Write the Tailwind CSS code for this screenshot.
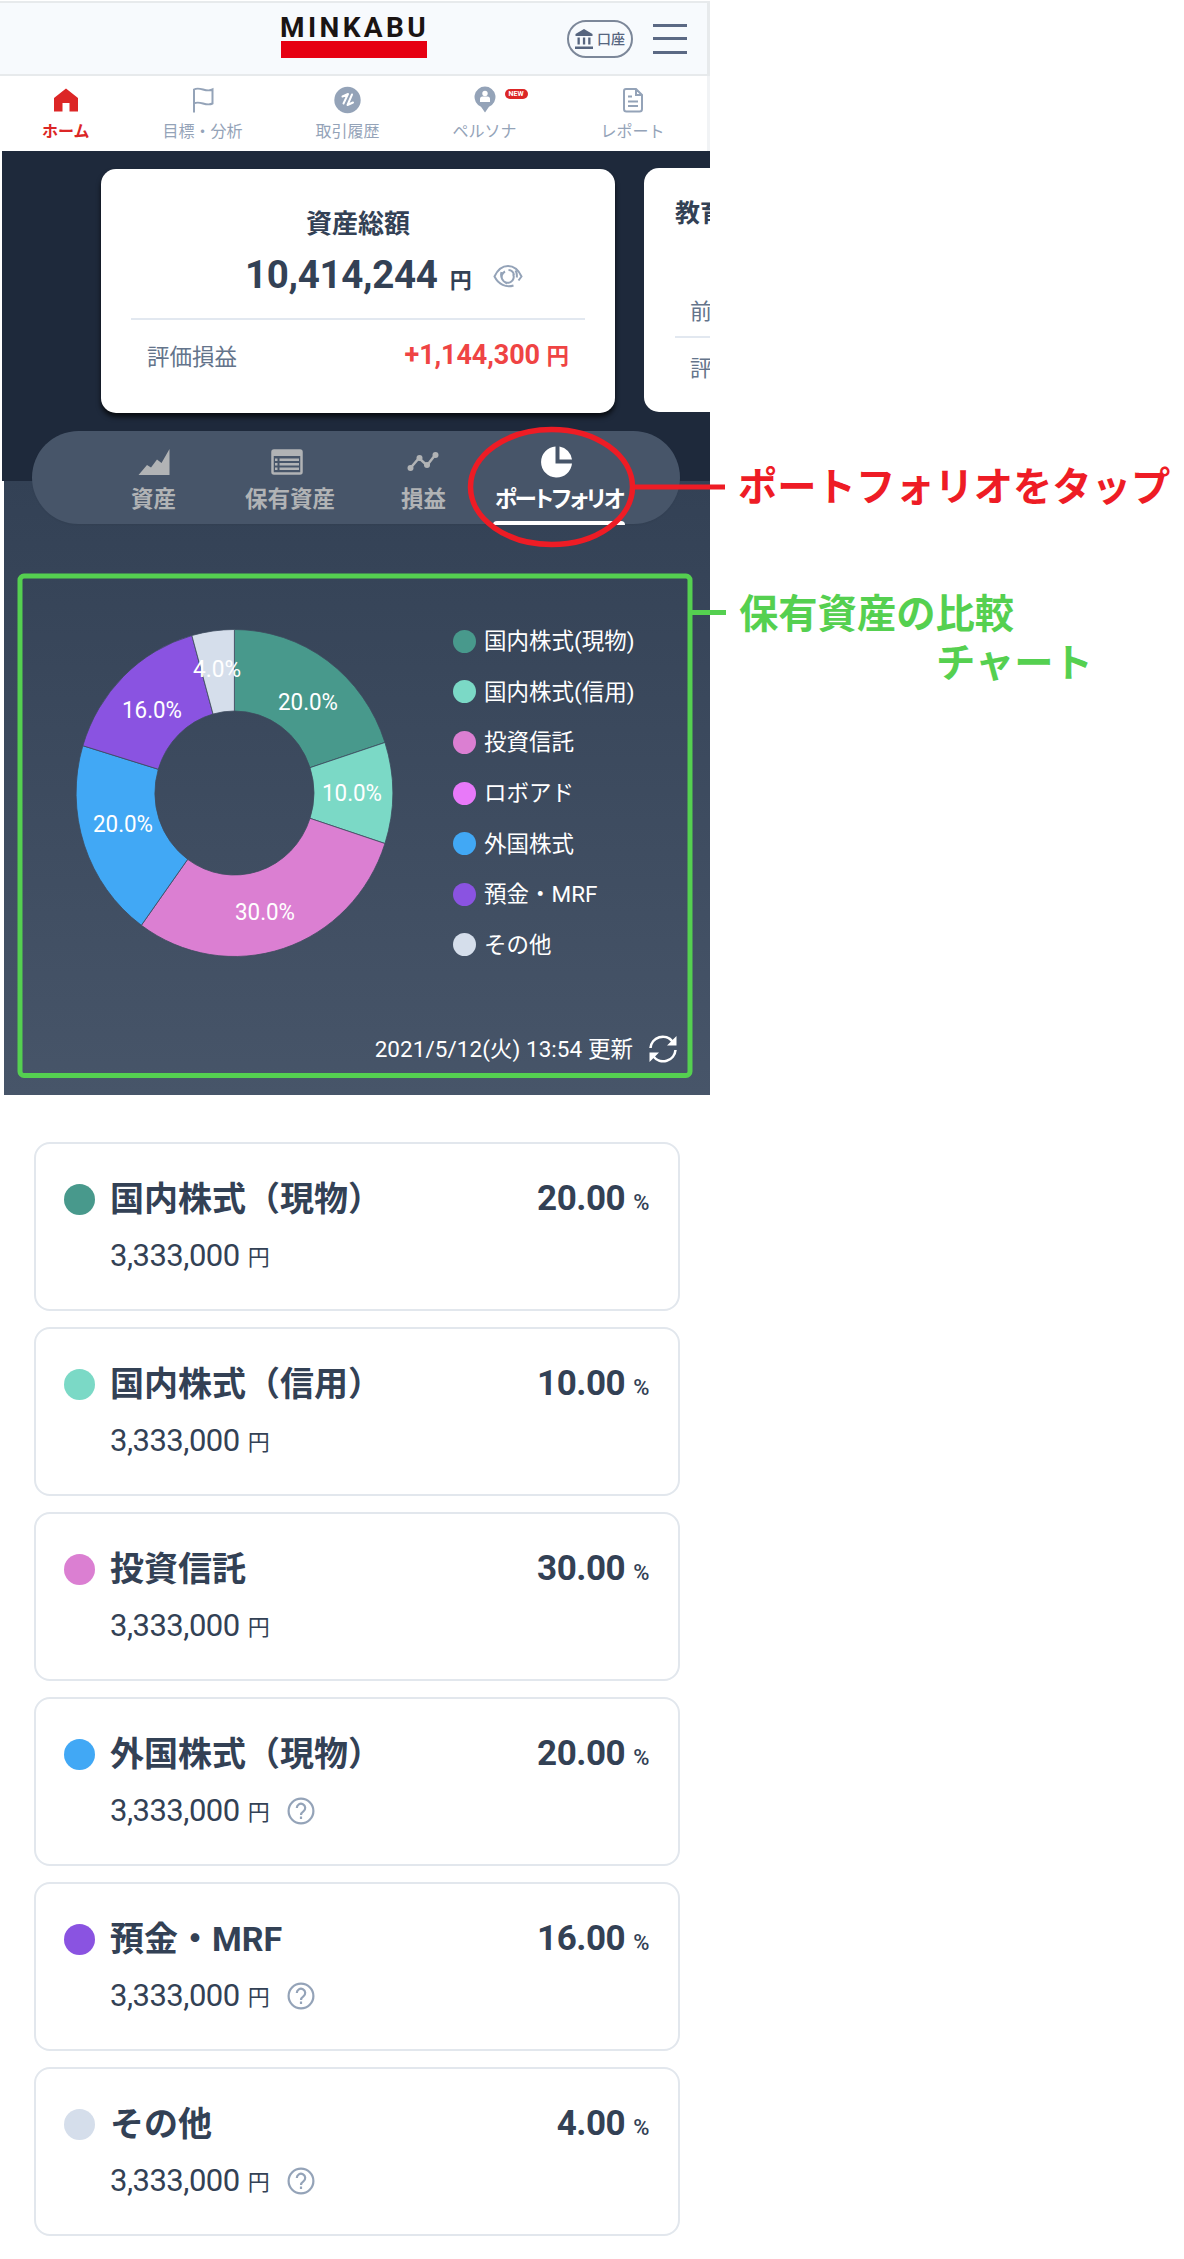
<!DOCTYPE html>
<html lang="ja">
  <head>
    <meta charset="UTF-8" />
    <meta name="viewport" content="width=device-width, initial-scale=1.0" />
    <!-- tailwind css -->
    <script src="https://cdn.jsdelivr.net/npm/@tailwindcss/browser@4"></script>
    <title>MINKABU ポートフォリオ</title>
  </head>
  <body class="bg-white">
    <div class="relative w-[1184px] h-[2259px] overflow-hidden font-['Roboto','Noto_Sans_CJK_JP',sans-serif] text-[#334155]">
      <!-- header -->
      <header class="w-[710px] h-[75px] mt-px border-y-2 border-r-3 border-[#e7eaec] bg-[#f7fafd] flex items-center pl-[280px]">
        <div class="w-[147px] pb-1">
          <p class="h-[26px] leading-[26px] text-[28px] font-bold tracking-[3.4px] text-[#1a1413] whitespace-nowrap">MINKABU</p>
          <div class="ml-px h-[17px] w-[146px] bg-[#e60012]"></div>
        </div>
        <button class="ml-[140px] w-[66px] h-[38px] rounded-full border-2 border-[#7c8799] flex items-center justify-center gap-1 text-[#56657f]">
          <svg class="w-[18px] h-5" viewBox="0 0 18 20" fill="currentColor">
            <path d="M9 0 17.500 5v2H.5V5z" />
            <path d="M2.500 8.500h2.300v7H2.500zM7.900 8.500h2.300v7H7.900zM13.200 8.500h2.300v7h-2.300zM0 17.500h18V20H0z" />
          </svg>
          <span class="text-[14px] leading-5 font-medium">口座</span>
        </button>
        <div class="ml-5 w-[34px] flex flex-col gap-[10.500px]">
          <span class="h-[3px] bg-[#5b6984]"></span>
          <span class="h-[3px] bg-[#5b6984]"></span>
          <span class="h-[3px] bg-[#5b6984]"></span>
        </div>
      </header>

      <!-- global nav -->
      <nav class="w-[710px] h-[75px] pl-[42px] pt-2.5 flex border-r-3 border-[#f1f3f5] text-[16px] leading-6 text-[#94a3b8] whitespace-nowrap">
        <a class="flex flex-col items-center text-[#dc2626] font-bold">
          <svg class="w-[26px] h-7" viewBox="0 0 26 28" fill="currentColor"><path d="M13 2.500 25 12v13.500h-8.500V17h-7v8.500H1V12z" /></svg>
          <span class="mt-1.5">ホーム</span>
        </a>
        <a class="ml-[73px] flex flex-col items-center">
          <svg class="w-[22px] h-7" viewBox="0 0 22 28" fill="none" stroke="currentColor" stroke-width="2"><path d="M2 26.500V3.500c6-3.500 12 3.500 18.500 0v14c-6.500 3.500-12.500-3.500-18.500 0" /></svg>
          <span class="mt-1.5">目標・分析</span>
        </a>
        <a class="ml-[73px] flex flex-col items-center">
          <svg class="w-7 h-7" viewBox="0 0 28 28">
            <circle cx="13.500" cy="14" r="13.200" fill="#94a3b8" />
            <path d="M8.500 10.500 14 8 9.500 17.500M18 8.500 13.500 19l5.500-2.500" fill="none" stroke="#fff" stroke-width="2" stroke-linecap="round" stroke-linejoin="round" />
          </svg>
          <span class="mt-1.5">取引履歴</span>
        </a>
        <a class="relative ml-[73px] flex flex-col items-center">
          <svg class="w-[22px] h-7" viewBox="0 0 22 28">
            <path d="M11 .5a10.500 10.500 0 0 1 4 20.200L11 26.500l-4-5.800A10.500 10.500 0 0 1 11 .5z" fill="#94a3b8" />
            <circle cx="11" cy="7.500" r="2.700" fill="#fff" />
            <path d="M6 16v-3a2.500 2.500 0 0 1 2.500-2.500h5A2.500 2.500 0 0 1 16 13v3z" fill="#fff" />
          </svg>
          <span class="mt-1.5">ペルソナ</span>
          <span class="absolute left-[52px] top-[3px] w-[23px] h-2.5 rounded-full bg-[#dc2626] text-white text-[7px] leading-[10.500px] font-bold text-center">NEW</span>
        </a>
        <a class="ml-[84px] flex flex-col items-center">
          <svg class="w-[22px] h-7" viewBox="0 0 22 28" fill="none" stroke="currentColor" stroke-width="2">
            <path d="M4 3h10l6 6v14a2.500 2.500 0 0 1-2.500 2.500h-13A2.500 2.500 0 0 1 2 23V5a2 2 0 0 1 2-2zM14 3v6h6M6 10.500h4M6 15.500h10M6 20h10" />
          </svg>
          <span class="mt-1.5">レポート</span>
        </a>
      </nav>

      <!-- asset summary cards -->
      <section class="ml-0.5 w-[708px] h-[330px] pt-[17px] pl-[99px] bg-[#1e293b] flex items-start gap-[29px] overflow-hidden">
        <div class="shrink-0 w-[514px] h-[244px] mt-px px-[30px] rounded-[15px] bg-white shadow-[0_4px_5px_rgba(0,0,0,0.7)]">
          <h2 class="pt-[38px] text-center text-[26px] leading-[34px] font-bold">資産総額</h2>
          <div class="mt-[15px] pl-[114px] h-[38px] flex items-baseline leading-[38px] font-bold">
            <span class="text-[38.500px] tracking-[-0.3px]">10,414,244</span>
            <span class="ml-3 text-[22px]">円</span>
            <svg class="ml-[21px] w-[30px] h-6" viewBox="0 0 30 24" fill="none" stroke="#94a3b8" stroke-width="2">
              <path d="M20.500 21.500C13 24 5.500 20.500 1.500 12.500 8-1.500 22-1.500 28.500 12.500L25.500 16.500" />
              <path d="M8.500 8a9.500 9.500 0 0 0 5.500 11.500M12 7.500a6 6 0 1 0 8 2.500M15.500 6a6 6 0 0 1 5.500 5M22.500 6.500c1.500 2.500 1.700 4.500 1.200 7" />
            </svg>
          </div>
          <div class="mt-[24px] border-t-2 border-[#e2e8f0] px-4 pt-[18px] flex justify-between leading-[34px]">
            <span class="text-[22.500px] text-[#64748b] pt-0.5">評価損益</span>
            <span class="text-[27px] text-[#ef4444] font-bold whitespace-nowrap tracking-[-0.1px]">+1,144,300 <span class="text-[22.500px]">円</span></span>
          </div>
        </div>
        <div class="shrink-0 w-[514px] h-[244px] pl-[31px] rounded-[15px] bg-white">
          <h2 class="pt-[29px] text-[25px] leading-[34px] font-bold">教育資金</h2>
          <p class="mt-[64px] pl-[15px] text-[22px] leading-[34px] text-[#64748b]">前日比</p>
          <p class="mt-[7px] border-t-2 border-[#e2e8f0] pt-[14px] pl-[15px] text-[22px] leading-[34px] text-[#64748b]">評価損益</p>
        </div>
      </section>

      <section class="ml-1 w-[706px] h-[614px] bg-linear-to-b from-[#334155] to-[#475569]">
        <!-- tabs -->
        <div class="relative -top-[50px] ml-7 w-[648px] h-[93px] pt-[15px] rounded-full bg-[#475569] flex items-start text-[22.500px] leading-[30px] font-bold text-[#b1b3b5] whitespace-nowrap shadow-xs">
          <a class="ml-[99px] flex flex-col items-center">
            <svg class="w-8 h-[34px]" viewBox="0 0 32 34" fill="currentColor"><path d="M.5 29 9 19l4 2.500 6-8 4.500 3.500L31.500 3v26z" /></svg>
            <span class="mt-1">資産</span>
          </a>
          <a class="ml-[69px] flex flex-col items-center">
            <svg class="mr-1.5 w-8 h-[34px]" viewBox="0 0 32 34">
              <rect x="1.500" y="4.500" width="29" height="23" rx="1.500" fill="none" stroke="currentColor" stroke-width="2.500" />
              <path d="M1 4h30v6H1zM4 12.500h2.500v2.500H4zM8.500 12.500H28v2.500H8.500zM4 17h2.500v2.500H4zM8.500 17H28v2.500H8.500zM4 21.500h2.500V24H4zM8.500 21.500H28V24H8.500z" fill="currentColor" />
            </svg>
            <span class="mt-1">保有資産</span>
          </a>
          <a class="ml-[66px] flex flex-col items-center">
            <svg class="mr-0.5 w-8 h-[34px]" viewBox="0 0 32 34" fill="currentColor">
              <path d="M3.500 22 12 12l8 7.500 8.500-11" fill="none" stroke="currentColor" stroke-width="2.500" />
              <circle cx="3.500" cy="22" r="3" /><circle cx="12.500" cy="12" r="3" /><circle cx="20" cy="19" r="3" /><circle cx="28.500" cy="9" r="3" />
            </svg>
            <span class="mt-1">損益</span>
          </a>
          <a class="ml-[47px] w-[132px] flex flex-col items-center text-white">
            <svg class="mr-1 w-8 h-[34px]" viewBox="0 0 32 34" fill="currentColor">
              <path d="M14.500.5v17h16.500A15.500 15.500 0 1 1 14.500.5z" />
              <path d="M18.500.5A15 15 0 0 1 31 13.500H18.500z" />
            </svg>
            <span class="mt-1 [font-feature-settings:'palt'] tracking-[-1.900px]">ポートフォリオ</span>
            <span class="mt-[7px] w-[132px] h-[3.500px] rounded-t bg-white"></span>
          </a>
        </div>

        <!-- donut chart + legend -->
        <div class="-mt-[93px] pt-[132px] flex">
          <svg class="w-[400px] h-[360px] shrink-0" viewBox="4 613 400 360" id="chart"></svg>
          <ul class="ml-[49px] pt-[3px] text-white text-[22.500px]" id="legend"></ul>
        </div>
        <div class="mt-[56px] pr-[33px] flex justify-end items-center gap-[16px] text-white text-[22.500px] leading-[40px]">
          <span class="whitespace-nowrap tracking-[0.05px]">2021/5/12(火) 13:54 更新</span>
          <svg class="w-7 h-7" viewBox="0 0 28 28" fill="none" stroke="currentColor" stroke-width="2.600">
            <path d="M1.500 13A12.300 12.300 0 0 1 23.500 6.500M26.500 15A12.300 12.300 0 0 1 4.500 21.500" />
            <path d="M27.500 1v9.500H18zM.5 27v-9.500H10z" fill="currentColor" stroke="none" />
          </svg>
        </div>
      </section>

      <!-- breakdown -->
      <ul class="mt-[47px] ml-[34px] w-[646px] flex flex-col gap-4" id="breakdown"></ul>

      <!-- callouts -->
      <svg class="absolute left-0 top-0 w-[760px] h-[1100px]" viewBox="0 0 760 1100" fill="none">
        <path d="M634 487h91" stroke="#ee1c25" stroke-width="5" />
        <ellipse cx="551.500" cy="487" rx="81" ry="57.500" stroke="#ee1c25" stroke-width="5.500" />
        <rect x="20" y="576" width="670" height="499.500" rx="4" stroke="#55d050" stroke-width="5" />
        <path d="M690 612.500h36" stroke="#55d050" stroke-width="5" />
      </svg>
      <p class="absolute left-[738px] top-[458px] text-[39.300px] leading-[60px] font-bold text-[#ee1c25] whitespace-nowrap">ポートフォリオをタップ</p>
      <p class="absolute left-[739px] top-[585px] text-[39.300px] leading-[60px] font-bold text-[#55d050] whitespace-nowrap">保有資産の比較</p>
      <p class="absolute left-[936px] top-[634px] text-[39.300px] leading-[60px] font-bold text-[#55d050] whitespace-nowrap">チャート</p>
    </div>

    <!-- custom js -->
    <script>
      const legend = [
        ['国内株式(現物)', '#48998c'],
        ['国内株式(信用)', '#7bd9c6'],
        ['投資信託', '#db7fd2'],
        ['ロボアド', '#e879f9'],
        ['外国株式', '#41a8f5'],
        ['預金・MRF', '#8a53e1'],
        ['その他', '#d5deeb'],
      ]
      document.querySelector('#legend').innerHTML = legend
        .map(
          ([name, color]) => `
          <li class="h-[50.600px] flex items-center gap-2 whitespace-nowrap">
            <span class="w-[23px] h-[23px] rounded-full" style="background:${color}"></span>
            <span class="leading-8">${name}</span>
          </li>`
        )
        .join('')

      // label, share, color, label position
      const slices = [
        ['20.0%', 20, '#48998c', 308, 702],
        ['10.0%', 10, '#7bd9c6', 352, 793],
        ['30.0%', 30, '#db7fd2', 265, 911.5],
        ['20.0%', 19.67, '#41a8f5', 123, 824],
        ['16.0%', 16, '#8a53e1', 152, 709.5],
        ['4.0%', 4.33, '#d5deeb', 217, 668.5],
      ]
      const cx = 234.4
      const cy = 793
      function point(share, rx, ry) {
        const a = (share / 100) * Math.PI * 2
        return (cx + rx * Math.sin(a)).toFixed(2) + ' ' + (cy - ry * Math.cos(a)).toFixed(2)
      }
      let start = 0
      let paths = ''
      let labels = ''
      slices.forEach(([label, share, color, x, y]) => {
        const end = start + share
        paths += `<path d="M${point(start, 158.3, 163.5)}A158.3 163.5 0 0 1 ${point(end, 158.3, 163.5)}L${point(end, 79.5, 82)}A79.5 82 0 0 0 ${point(start, 79.5, 82)}Z" fill="${color}" stroke="#3d4b5e" stroke-width="0.8" />`
        labels += `<text x="${x}" y="${y + 8}" text-anchor="middle" font-size="23" fill="#fff" textLength="${label.length * 12}" lengthAdjust="spacingAndGlyphs">${label}</text>`
        start = end
      })
      document.querySelector('#chart').innerHTML = paths + labels

      const assets = [
        ['国内株式（現物）', '20.00', '#48998c', false],
        ['国内株式（信用）', '10.00', '#7bd9c6', false],
        ['投資信託', '30.00', '#db7fd2', false],
        ['外国株式（現物）', '20.00', '#41a8f5', true],
        ['預金・MRF', '16.00', '#8a53e1', true],
        ['その他', '4.00', '#d5deeb', true],
      ]
      const help = `
        <svg class="ml-[17px] w-7 h-7 self-center" viewBox="0 0 28 28" fill="none" stroke="#94a3b8" stroke-width="2.200">
          <circle cx="14" cy="14" r="12.400" />
          <path d="M9.800 11a4.200 4.200 0 1 1 6.600 3.400c-1.700 1.200-2.400 1.800-2.400 3.600" />
          <path d="M14 19.500v2.500" />
        </svg>`
      document.querySelector('#breakdown').innerHTML = assets
        .map(
          ([name, rate, color, hasHelp]) => `
          <li class="h-[169px] rounded-[16px] border-2 border-[#e2e7ed] bg-white pt-[33px] pl-[28px] pr-[29px]">
            <div class="flex items-center h-[44px]">
              <span class="w-[31px] h-[31px] rounded-full" style="background:${color}"></span>
              <span class="ml-[15px] flex-1 text-[34px] leading-[44px] font-bold whitespace-nowrap">${name}</span>
              <span class="pt-[3px] text-[35px] leading-[44px] font-bold tracking-[-0.5px]">${rate} <span class="text-[22px] font-medium">%</span></span>
            </div>
            <div class="mt-[15px] pl-[46px] h-[40px] flex items-baseline leading-[40px]">
              <span class="text-[31px] tracking-[-0.5px]">3,333,000</span>
              <span class="relative -top-px ml-2 text-[22px]">円</span>
              ${hasHelp ? help : ''}
            </div>
          </li>`
        )
        .join('')
    </script>
  </body>
</html>
